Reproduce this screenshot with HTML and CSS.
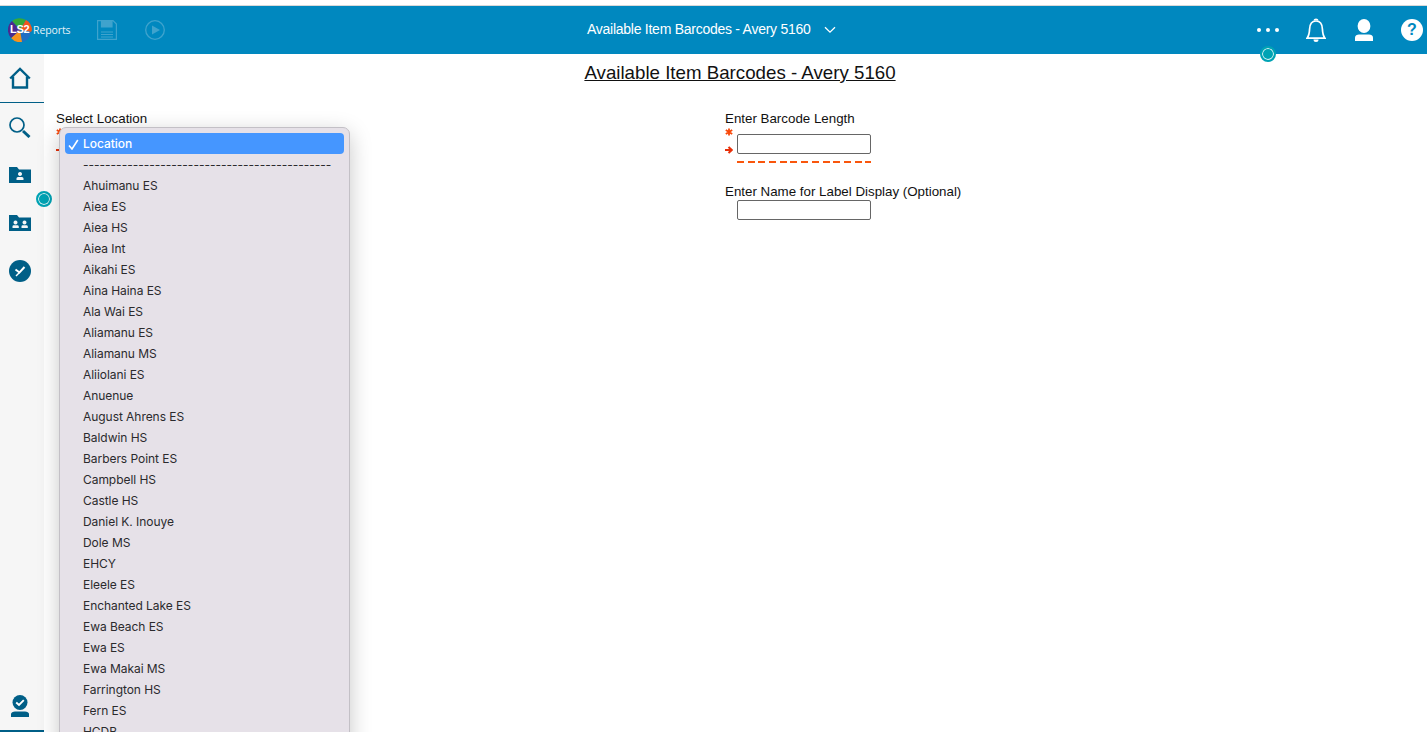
FILE: index.html
```html
<!DOCTYPE html>
<html lang="en">
<head>
<meta charset="utf-8">
<title>Available Item Barcodes - Avery 5160</title>
<link rel="stylesheet" href="styles.css">
</head>
<body>
<div class="app">
  <header class="topbar">
    <div class="top-left">
      <div class="logo">
        <svg class="logo-mark" width="24" height="24" viewBox="0 0 24 24">
          <path d="M12 12 L4 3 A12 12 0 0 1 18 2 Z" fill="#35a83a"/>
          <path d="M12 12 L18 2 A12 12 0 0 1 24 12 L23 14 Z" fill="#f0561d"/>
          <path d="M12 12 L23 14 A12 12 0 0 1 14 24 Z" fill="#1f6fc4"/>
          <path d="M12 12 L14 24 A12 12 0 0 1 3 20 Z" fill="#f5921e"/>
          <path d="M12 12 L3 20 A12 12 0 0 1 4 3 Z" fill="#4a2a8f"/>
        </svg>
        <span class="logo-ls">LS2</span>
        <span class="logo-text">Reports</span>
      </div>
      <svg class="tool-save" width="20" height="20" viewBox="0 0 20 20" fill="none" stroke="#3fa3cd" stroke-width="1.2">
        <path d="M0.600 0.600H16L19.400 4V19.400H0.600Z"/>
        <path d="M4.500 0.600H15V7H4.500Z" fill="#3fa3cd"/>
        <path d="M4 12H16M4 14.500H16M4 17H16"/>
      </svg>
      <svg class="tool-run" width="20" height="20" viewBox="0 0 20 20" fill="none" stroke="#3fa3cd" stroke-width="1.3">
        <circle cx="10" cy="10" r="9.300"/>
        <path d="M7 5.500L15 10L7 14.500Z" fill="#3fa3cd" stroke="none"/>
      </svg>
    </div>
    <div class="top-title">
      <span>Available Item Barcodes - Avery 5160</span>
      <svg width="12" height="8" viewBox="0 0 12 8" fill="none" stroke="#fff" stroke-width="1.3"><path d="M1 1.2L6 6.2L11 1.2"/></svg>
    </div>
    <div class="top-right">
      <svg class="more" width="24" height="6" viewBox="0 0 24 6" fill="#fff"><circle cx="3" cy="3" r="2"/><circle cx="12" cy="3" r="2"/><circle cx="21" cy="3" r="2"/></svg>
      <svg class="bell" width="20" height="24" viewBox="0 0 20 24" fill="none" stroke="#fff" stroke-width="1.700">
        <path d="M1 20.200C3.300 17.500 3.400 15 3.600 11C3.800 6 6.300 3 10 3C13.700 3 16.200 6 16.400 11C16.600 15 16.700 17.500 19 20.200Z"/>
        <path d="M8.300 2.500C8.600 0.800 11.400 0.800 11.700 2.500"/>
        <path d="M7.500 21.500H12.500A2.500 2.500 0 0 1 7.500 21.500Z" fill="#fff" stroke="none"/>
      </svg>
      <svg class="person" width="18" height="22" viewBox="0 0 18 22" fill="#fff">
        <ellipse cx="9" cy="7" rx="6.400" ry="7"/>
        <path d="M0 22V18.500C0 16.500 2 15.500 4 15.500H14C16 15.500 18 16.500 18 18.500V22Z"/>
      </svg>
      <div class="help">?</div>
    </div>
  </header>
  <div class="below">
    <nav class="sidebar">
      <div class="nav-home">
        <svg width="22" height="22" viewBox="0 0 22 22" fill="none" stroke="#005f87" stroke-width="2.400">
          <path d="M1.200 11.500L11 2L20.800 11.500"/>
          <path d="M4 9.500V20.500H18V9.500"/>
        </svg>
      </div>
      <svg class="nav-search" width="22" height="22" viewBox="0 0 22 22" fill="none" stroke="#005f87">
        <circle cx="8" cy="9" r="7" stroke-width="1.700"/>
        <path d="M14 15L20.500 21" stroke-width="3"/>
      </svg>
      <svg class="nav-folder" width="22" height="16" viewBox="0 0 22 16" fill="#005f87">
        <path fill-rule="evenodd" d="M0 0H8L10 2.500H22V16H0ZM11 5A2 2 0 1 0 11.010 5ZM7.500 11.500V13H14.500V11.500C14.500 10.500 13.500 10 12.500 10H9.500C8.500 10 7.500 10.500 7.500 11.500Z"/>
      </svg>
      <svg class="nav-folder2" width="22" height="16" viewBox="0 0 22 16" fill="#005f87">
        <path fill-rule="evenodd" d="M0 0H8L10 2.500H22V16H0ZM6.500 5.500A2 2 0 1 0 6.510 5.500ZM15.500 5.500A2 2 0 1 0 15.510 5.500ZM3.500 11.500V13H9.800V11.500C9.800 10.700 9 10.200 8 10.200H5C4 10.200 3.500 10.700 3.500 11.500ZM12.500 11.500V13H18.800V11.500C18.800 10.700 18 10.200 17 10.200H14C13 10.200 12.500 10.700 12.500 11.500Z"/>
      </svg>
      <svg class="nav-check" width="22" height="22" viewBox="0 0 22 22">
        <circle cx="11" cy="11" r="11" fill="#005f87"/>
        <path d="M6.500 9.500L10.500 12.500L15.500 7" fill="none" stroke="#fff" stroke-width="2"/>
        <path d="M10.500 12.500L7 16" fill="none" stroke="#fff" stroke-width="1.400"/>
      </svg>
      <div class="nav-spacer"></div>
      <div class="nav-user">
        <svg width="18" height="22" viewBox="0 0 18 22" fill="#005f87">
          <circle cx="9" cy="7.500" r="7.500"/>
          <path d="M0 22V19C0 17.500 2 16.500 4 16.500H14C16 16.500 18 17.500 18 19V22Z"/>
          <path d="M5.200 7.500L8 10L12.800 5.200" fill="none" stroke="#fff" stroke-width="1.900"/>
        </svg>
      </div>
    </nav>
    <main class="content">
      <h1 class="page-title">Available Item Barcodes - Avery 5160</h1>
      <div class="form">
        <section class="col-location">
          <div class="label">Select Location</div>
          <div class="marks">
            <svg width="8" height="8" viewBox="0 0 8 8" stroke="#f8480a" stroke-width="1.800"><path d="M4 0.500V7.500M0.800 2L7.200 6M7.200 2L0.800 6"/></svg>
            <svg width="8" height="8" viewBox="0 0 8 8" fill="none" stroke="#e8300a" stroke-width="2.100"><path d="M0 4H6M3.500 1L6.800 4L3.500 7"/></svg>
          </div>
        </section>
        <section class="col-barcode">
          <div class="label">Enter Barcode Length</div>
          <div class="field-row">
            <div class="marks">
              <svg width="8" height="8" viewBox="0 0 8 8" stroke="#f8480a" stroke-width="1.800"><path d="M4 0.500V7.500M0.800 2L7.200 6M7.200 2L0.800 6"/></svg>
              <svg width="8" height="8" viewBox="0 0 8 8" fill="none" stroke="#e8300a" stroke-width="2.100"><path d="M0 4H6M3.500 1L6.800 4L3.500 7"/></svg>
            </div>
            <div class="input-wrap">
              <div class="input"></div>
              <div class="dash"></div>
            </div>
          </div>
          <div class="label label-name">Enter Name for Label Display (Optional)</div>
          <div class="input input-name"></div>
        </section>
      </div>
    </main>
  </div>
  <div class="pulse pulse-top"></div>
  <div class="pulse pulse-side"></div>
  <div class="menu">
    <div class="opt selected">
      <svg class="tick" width="11" height="11" viewBox="0 0 11 11" fill="none" stroke="#fff" stroke-width="1.600"><path d="M1 6.500L4 10L9.800 1"/></svg>
      Location
    </div>
    <div class="opt opt-sep">---------------------------------------------</div>
    <div class="opt">Ahuimanu ES</div>
    <div class="opt">Aiea ES</div>
    <div class="opt">Aiea HS</div>
    <div class="opt">Aiea Int</div>
    <div class="opt">Aikahi ES</div>
    <div class="opt">Aina Haina ES</div>
    <div class="opt">Ala Wai ES</div>
    <div class="opt">Aliamanu ES</div>
    <div class="opt">Aliamanu MS</div>
    <div class="opt">Aliiolani ES</div>
    <div class="opt">Anuenue</div>
    <div class="opt">August Ahrens ES</div>
    <div class="opt">Baldwin HS</div>
    <div class="opt">Barbers Point ES</div>
    <div class="opt">Campbell HS</div>
    <div class="opt">Castle HS</div>
    <div class="opt">Daniel K. Inouye</div>
    <div class="opt">Dole MS</div>
    <div class="opt">EHCY</div>
    <div class="opt">Eleele ES</div>
    <div class="opt">Enchanted Lake ES</div>
    <div class="opt">Ewa Beach ES</div>
    <div class="opt">Ewa ES</div>
    <div class="opt">Ewa Makai MS</div>
    <div class="opt">Farrington HS</div>
    <div class="opt">Fern ES</div>
    <div class="opt">HCDB</div>
  </div>
</div>
</body>
</html>
```
FILE: styles.css
```css
* { box-sizing: border-box; }
html, body { margin: 0; height: 100%; overflow: hidden; background: #fff; }
body { font-family: "Liberation Sans", Arial, sans-serif; color: #111; }
.app { position: relative; width: 1427px; height: 732px; overflow: hidden; padding-top: 6px; display: flex; flex-direction: column; }
.app::before { content: ""; position: absolute; left: 0; right: 0; top: 5px; height: 1px; background: #d9d9d9; }

.topbar { position: relative; height: 48px; background: #0088bf; display: flex; align-items: center; flex: none; }
.top-left { display: flex; align-items: center; padding-left: 8px; }
.logo { position: relative; width: 64px; height: 24px; display: flex; align-items: center; }
.logo-mark { flex: none; }
.logo-ls { position: absolute; left: 2px; top: 5px; font-size: 11px; font-weight: 700; color: #fff; letter-spacing: -0.3px; }
.logo-text { margin-left: 1px; font-family: "Open Sans", sans-serif; font-size: 10.5px; color: #e4f2f8; letter-spacing: -0.1px; }
.tool-save { margin-left: 25px; }
.tool-run { margin-left: 28px; }
.top-title { position: absolute; left: 587px; top: 0; height: 46px; display: flex; align-items: center; gap: 13px; color: #fff; font-size: 14px; letter-spacing: -0.26px; }
.top-title svg { margin-top: 1px; }
.top-right { position: absolute; right: 0; top: 0; height: 48px; width: 175px; display: flex; align-items: center; }
.more { margin-left: 4px; }
.bell { margin-left: 26px; }
.person { margin-left: 29px; }
.help { margin-left: 28px; width: 22px; height: 22px; border-radius: 50%; background: #fff; color: #0088bf; font-weight: 700; font-size: 16px; line-height: 22px; text-align: center; }

.below { flex: 1; display: flex; min-height: 0; }
.sidebar { width: 44px; flex: none; background: #f6f6f6; display: flex; flex-direction: column; align-items: center; padding-right: 4px; }
.nav-home { width: 44px; height: 49px; margin-right: -4px; border-bottom: 1px solid #005f87; padding: 13px 0 0 9px; }
.nav-home svg { display: block; }
.nav-search { margin-top: 13px; }
.nav-folder { margin-top: 29px; }
.nav-folder2 { margin-top: 32px; }
.nav-check { margin-top: 29px; }
.nav-spacer { flex: 1; }
.nav-user { width: 44px; height: 38px; margin-right: -4px; border-bottom: 2px solid #005f87; padding: 1px 0 0 11px; }
.nav-user svg { display: block; }

.content { flex: 1; position: relative; min-width: 0; }
.page-title { margin: 8px 0 0; width: 1392px; text-align: center; font-size: 18.72px; line-height: 22px; font-weight: 400; text-decoration: underline; }
.form { display: flex; margin-top: 27px; }
.label { font-size: 13.33px; line-height: 15px; }
.col-location { width: 681px; padding-left: 12px; }
.field-row { display: flex; }
.marks { width: 12px; display: flex; flex-direction: column; gap: 10px; padding-top: 2px; }
.marks svg { display: block; }
.input-wrap { padding-top: 8px; }
.input { width: 134px; height: 20px; border: 1px solid #666; border-radius: 2px; background: #fff; }
.dash { width: 134px; height: 2px; margin-top: 7px; background: repeating-linear-gradient(90deg, #f9560c 0 7px, transparent 7px 10.7px); }
.label-name { margin-top: 21px; }
.input-name { margin-top: 1px; margin-left: 12px; }

.pulse { position: absolute; width: 16px; height: 16px; border-radius: 50%; background: #00a3b4; border: 2px solid #00a3b4; box-shadow: inset 0 0 0 1px #dff4f6; }
.pulse-top { left: 1260px; top: 46px; }
.pulse-side { left: 36px; top: 191px; }

.menu { position: absolute; left: 59px; top: 127px; width: 291px; height: 640px; padding: 5px; background: #e6e1e8; border: 1px solid #c3c0c6; border-radius: 7px; box-shadow: 0 6px 22px rgba(0, 0, 0, 0.22); font-family: "Inter", "Liberation Sans", sans-serif; font-size: 12px; letter-spacing: -0.05px; color: #2b2a2d; }
.opt { position: relative; height: 21px; line-height: 21px; padding-left: 18px; white-space: nowrap; overflow: hidden; }
.opt-sep { letter-spacing: 0; }
.opt.selected { background: #4596ff; color: #fff; border-radius: 4px; font-weight: 500; }
.tick { position: absolute; left: 3px; top: 6px; }
```
